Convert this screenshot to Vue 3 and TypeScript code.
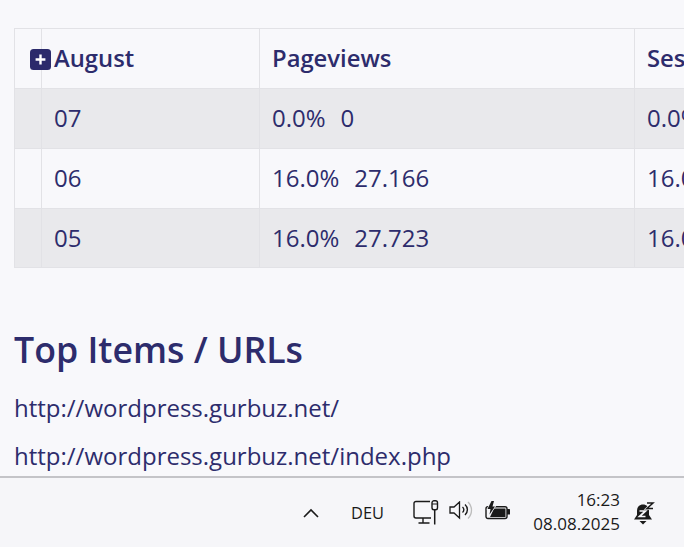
<script setup lang="ts">
interface Row { label: string; pct: string; value: string; next: string }
const rows: Row[] = [
  { label: '07', pct: '0.0%', value: '0', next: '0.0%' },
  { label: '06', pct: '16.0%', value: '27.166', next: '16.0%' },
  { label: '05', pct: '16.0%', value: '27.723', next: '16.0%' },
]
const links: string[] = ['http://wordpress.gurbuz.net/', 'http://wordpress.gurbuz.net/index.php']
</script>

<template>
  <div class="screen">
    <main class="page">
      <div class="table-clip">
        <table class="stats">
          <colgroup>
            <col class="c0" />
            <col class="c1" />
            <col class="c2" />
            <col class="c2" />
          </colgroup>
          <thead>
            <tr>
              <th class="toggle-cell">
                <span class="toggle">
                  <svg width="21" height="21" viewBox="0 0 21 21" aria-hidden="true">
                    <rect width="21" height="21" rx="3.5" fill="#2b2a6b" />
                    <path d="M10.5 5.6v9.8M5.6 10.5h9.8" stroke="#fff" stroke-width="2.4" />
                  </svg>
                </span>
              </th>
              <th>August</th>
              <th>Pageviews</th>
              <th>Sessions</th>
            </tr>
          </thead>
          <tbody>
            <tr v-for="row in rows" :key="row.label">
              <td></td>
              <td>{{ row.label }}</td>
              <td><span class="pct">{{ row.pct }}</span>{{ row.value }}</td>
              <td>{{ row.next }}</td>
            </tr>
          </tbody>
        </table>
      </div>
      <h2 class="title">Top Items / URLs</h2>
      <a v-for="link in links" :key="link" class="link" href="#">{{ link }}</a>
    </main>

    <footer class="taskbar">
      <svg class="chevron" width="18" height="10" viewBox="0 0 18 10" aria-hidden="true">
        <path d="M2 9l7-7 7 7" fill="none" stroke="#1a1a1a" stroke-width="1.6" />
      </svg>
      <span class="lang">DEU</span>
      <svg class="net" width="26" height="26" viewBox="0 0 26 26" aria-hidden="true">
        <path d="M17 1.500H3a2 2 0 0 0-2 2V16a2 2 0 0 0 2 2h15" fill="none" stroke="#1a1a1a" stroke-width="1.400" />
        <path d="M10 18v4.500M5.500 23h11" fill="none" stroke="#1a1a1a" stroke-width="1.400" />
        <rect x="19" y="0.800" width="5.500" height="9" rx="2" fill="none" stroke="#1a1a1a" stroke-width="1.400" />
        <path d="M19 4h5.500" stroke="#1a1a1a" stroke-width="1" />
        <path d="M21.700 10v14.500" stroke="#1a1a1a" stroke-width="1.500" />
      </svg>
      <svg class="sound" width="24" height="20" viewBox="0 0 24 20" aria-hidden="true">
        <path d="M1 6h4l5.500-5v16L5 12H1z" fill="none" stroke="#1a1a1a" stroke-width="1.300" />
        <path d="M13.500 6a3.500 3.500 0 0 1 0 5.500M16 3.500a7 7 0 0 1 0 10.500" fill="none" stroke="#1a1a1a" stroke-width="1.400" />
        <path d="M19 1a11.500 11.500 0 0 1 0 16.500" fill="none" stroke="#bdbdbd" stroke-width="1.300" />
      </svg>
      <svg class="battery" width="26" height="24" viewBox="0 0 26 24" aria-hidden="true">
        <rect x="1" y="5.800" width="21" height="11.700" rx="2" fill="none" stroke="#1a1a1a" stroke-width="1.400" />
        <path d="M9 7.500H20.500V16H5z" fill="#1a1a1a" />
        <path d="M6.500 0L2.500 8H5.500L4.500 13.500L10 5.500H7.500L9 0z" fill="#1a1a1a" stroke="#f6f6f9" stroke-width="1.200" paint-order="stroke" />
        <path d="M22 8h2.500a.5.500 0 0 1 .5.500v4.500a.5.500 0 0 1-.5.500H22z" fill="#1a1a1a" />
      </svg>
      <div class="clock">
        <span>16:23</span>
        <span>08.08.2025</span>
      </div>
      <svg class="bell" width="24" height="26" viewBox="0 0 24 26" aria-hidden="true">
        <path d="M10 4.500c4 0 6 3 6 6.500v4l3 4.500H1l3-4.500v-4c0-3.500 2-6.500 6-6.500z" fill="#1a1a1a" />
        <path d="M6.500 21h7L10 24.500z" fill="#1a1a1a" />
        <path d="M6.500 11h6l-6 5.500h6" fill="none" stroke="#f7f7fa" stroke-width="1.700" />
        <path d="M14 3h6l-6 5.500h6" fill="none" stroke="#f6f6f9" stroke-width="2.600" />
        <path d="M14 3h6l-6 5.500h6" fill="none" stroke="#1a1a1a" stroke-width="1.500" />
      </svg>
    </footer>
  </div>
</template>

<style>
html, body { margin: 0; background: #f8f8fb; }
</style>

<style scoped>
.screen {
  width: 684px;
  height: 547px;
  display: flex;
  flex-direction: column;
  overflow: hidden;
  background: #f8f8fb;
  font-family: "Open Sans", sans-serif;
  color: #2d2c6c;
}
.page {
  flex: 1;
  min-height: 0;
  overflow: hidden;
  display: flex;
  flex-direction: column;
  align-items: flex-start;
  padding: 28px 0 0 14px;
}
.table-clip {
  width: 670px;
  overflow: hidden;
  flex: none;
}
.stats {
  table-layout: fixed;
  width: 996px;
  border-collapse: collapse;
  font-size: 24px;
  line-height: 32px;
}
.c0 { width: 27px; }
.c1 { width: 218px; }
.c2 { width: 375px; }
.stats th, .stats td {
  height: 60px;
  padding: 0 12px 2px;
  box-sizing: border-box;
  border: 1px solid #e2e2e6;
  text-align: left;
  white-space: nowrap;
}
.stats tbody tr:last-child td { height: 59px; padding-bottom: 1px; }
.stats th { font-weight: 600; font-size: 23.8px; }
.stats td { font-weight: 400; }
.stats tbody tr:nth-child(odd) td { background: #e9e9ec; }
.stats .toggle-cell { padding: 0; position: relative; overflow: visible; }
.toggle {
  position: absolute;
  left: 15px;
  top: 20px;
  display: block;
  width: 21px;
  height: 21px;
}
.toggle svg { display: block; }
.pct { margin-right: 15px; }
.title {
  margin: 56px 0 3px;
  font-size: 35.7px;
  line-height: 50px;
  font-weight: 600;
}
.link {
  margin-top: 14px;
  font-size: 24px;
  line-height: 34px;
  color: inherit;
  text-decoration: none;
}
.taskbar {
  flex: none;
  height: 71px;
  box-sizing: border-box;
  border-top: 2px solid #c4c4c8;
  background: #f6f6f9;
  display: flex;
  align-items: center;
  color: #1a1a1a;
  padding-left: 302px;
}
.chevron { margin-right: 31px; }
.lang { font-size: 16.4px; width: 34px; margin-right: 28px; margin-bottom: 1px; }
.net { margin-right: 10px; }
.sound { margin-right: 12px; margin-bottom: 3px; }
.battery { margin-right: 22px; }
.clock {
  display: flex;
  flex-direction: column;
  align-items: flex-end;
  font-size: 17px;
  line-height: 24px;
  width: 87px;
  margin-right: 13px;
  margin-bottom: 1px;
}
</style>
